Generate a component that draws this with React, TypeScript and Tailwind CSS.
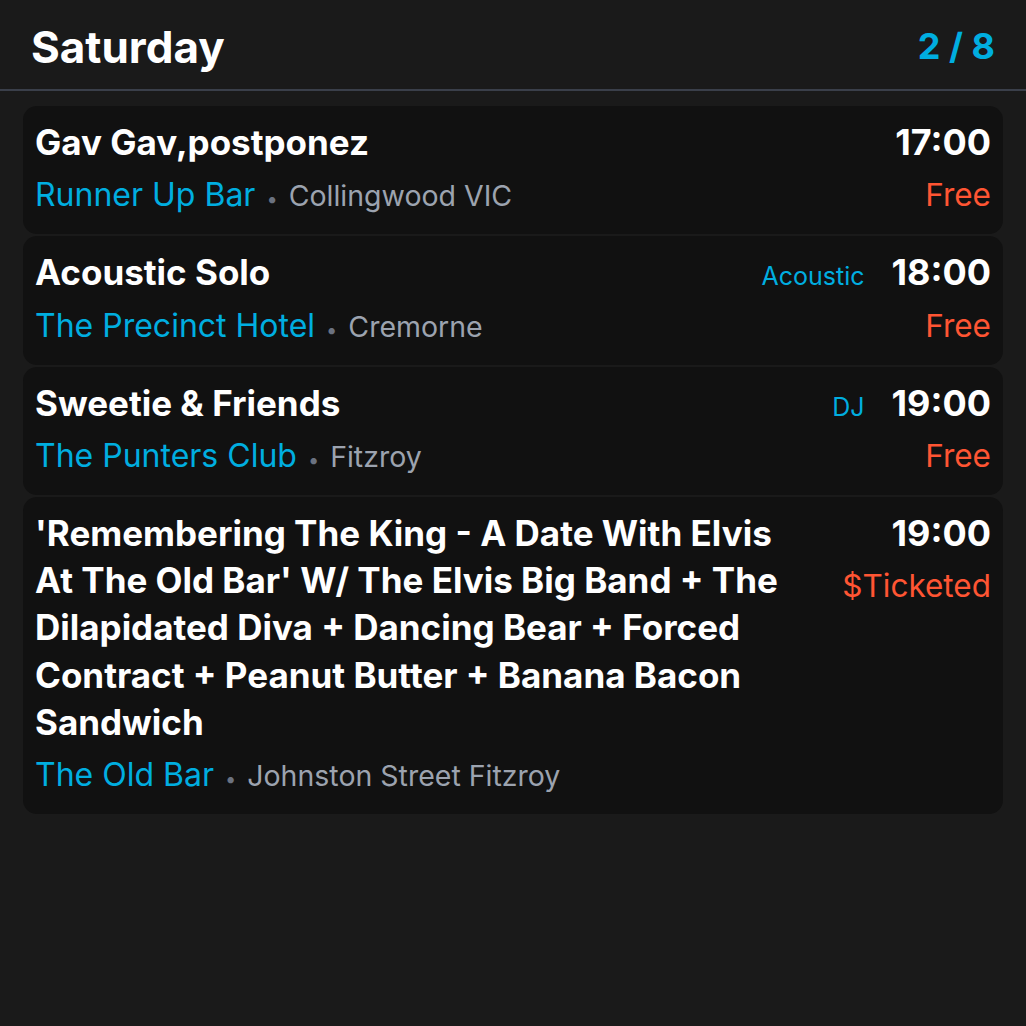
import React from "react";

type Ev = {
  title: string;
  venue: string;
  place: string;
  time: string;
  price: string;
  tag?: string;
};

const events: Ev[] = [
  { title: "Gav Gav,postponez", venue: "Runner Up Bar", place: "Collingwood VIC", time: "17:00", price: "Free" },
  { title: "Acoustic Solo", venue: "The Precinct Hotel", place: "Cremorne", time: "18:00", price: "Free", tag: "Acoustic" },
  { title: "Sweetie & Friends", venue: "The Punters Club", place: "Fitzroy", time: "19:00", price: "Free", tag: "DJ" },
  {
    title:
      "'Remembering The King - A Date With Elvis At The Old Bar' W/ The Elvis Big Band + The Dilapidated Diva + Dancing Bear + Forced Contract + Peanut Butter + Banana Bacon Sandwich",
    venue: "The Old Bar",
    place: "Johnston Street Fitzroy",
    time: "19:00",
    price: "$Ticketed",
  },
];

function Card({ ev }: { ev: Ev }) {
  return (
    <div className="rounded-[14px] bg-[#111111] px-3 pt-[13px] pb-[12px] flex gap-10">
      <div className="flex-1 min-w-0">
        <div className="text-[35px] leading-[47.3px] font-bold text-white">{ev.title}</div>
        <div className="mt-[6px] flex items-baseline text-[32px] leading-[45px]">
          <span className="text-[#00aee0]">{ev.venue}</span>
          <span className="text-[#6b7280] text-[20px] mx-[11px]">•</span>
          <span className="text-[#9ca3af] text-[28.5px]">{ev.place}</span>
        </div>
      </div>
      <div className="flex flex-col items-end shrink-0">
        <div className="flex items-baseline">
          {ev.tag && <span className="text-[25px] text-[#00aee0] mr-[27px]">{ev.tag}</span>}
          <span className="text-[36px] leading-[47.3px] font-bold text-white">{ev.time}</span>
        </div>
        <div className="mt-[6px] text-[31.5px] leading-[45px] text-[#ff5533]">{ev.price}</div>
      </div>
    </div>
  );
}

export default function App() {
  return (
    <div
      className="w-[1026px] h-[1026px] bg-[#1a1a1a] overflow-hidden"
      style={{ fontFamily: "Inter, 'Noto Sans', sans-serif" }}
    >
      <div className="h-[91px] flex items-center justify-between pl-[31px] pr-[31px] border-b-2 border-[#3a3f4a]">
        <div className="text-[44px] font-bold text-white mt-[4px]">Saturday</div>
        <div className="text-[36px] font-bold text-[#00aee0] mt-[2px]">2 / 8</div>
      </div>
      <div className="px-[23px] pt-[15px] flex flex-col gap-[2px]">
        {events.map((e, i) => (
          <Card key={i} ev={e} />
        ))}
      </div>
    </div>
  );
}
